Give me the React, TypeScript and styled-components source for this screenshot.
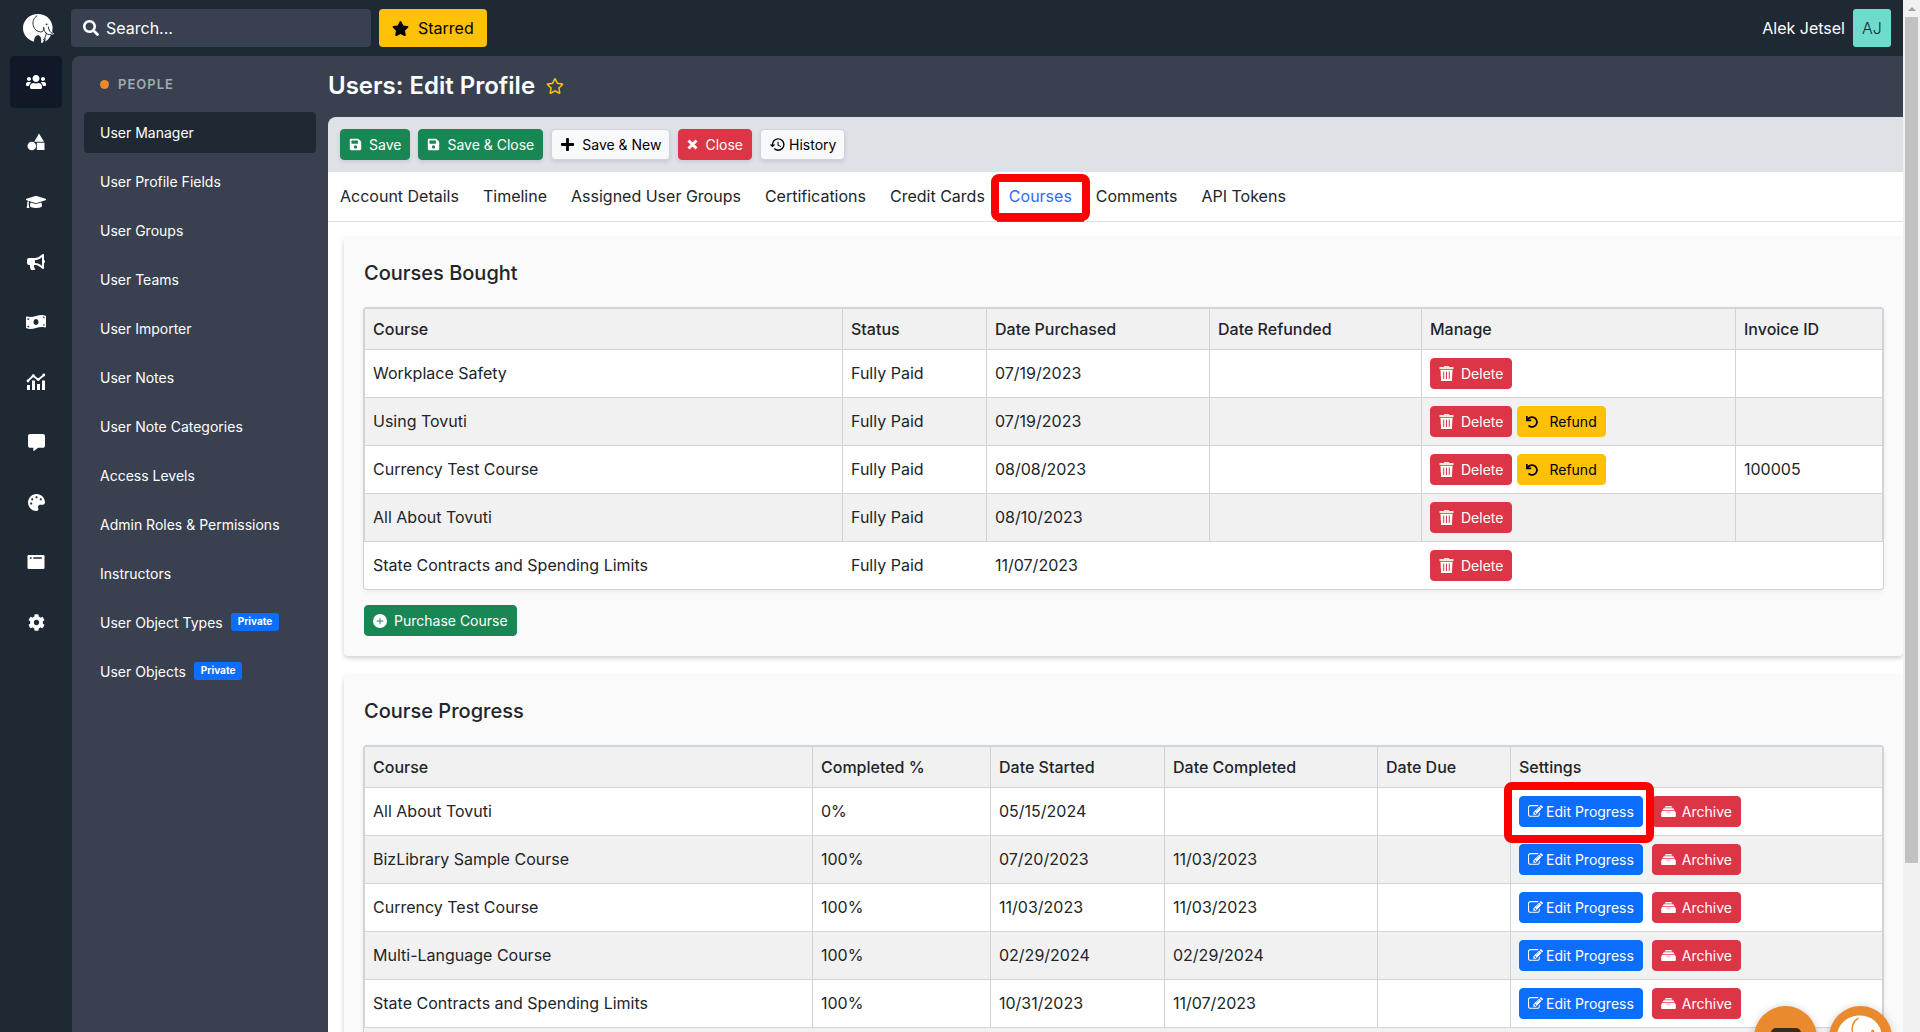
import React from "react";
import styled, { createGlobalStyle, css } from "styled-components";
import {
  FaBullhorn,
  FaCog,
  FaCommentAlt,
  FaGraduationCap,
  FaMoneyBillWave,
  FaPalette,
  FaPlus,
  FaRegStar,
  FaSave,
  FaSearch,
  FaStar,
  FaUndo,
  FaUsers,
} from "react-icons/fa";
import { MdHistory } from "react-icons/md";
import { BsPlusCircleFill } from "react-icons/bs";

const color = {
  chrome: "#1f2933",
  chromeActive: "#111827",
  panel: "#394150",
  toolbar: "#dee2e6",
  border: "#ced4da",
  stripe: "#f1f1f1",
  card: "#fafafa",
  text: "#212529",
  green: "#198754",
  red: "#dc3545",
  blue: "#0d6efd",
  yellow: "#ffc107",
  orange: "#e98a2e",
};

const GlobalStyle = createGlobalStyle`
  *, *::before, *::after { box-sizing: border-box; }
  body {
    margin: 0;
    background: #fff;
    color: ${color.text};
    font-family: Inter, "Liberation Sans", sans-serif;
    font-size: 16px;
    font-weight: 400;
    line-height: 24px;
  }
  button, input { font: inherit; color: inherit; }
  a { color: inherit; text-decoration: none; }
`;

const Page = styled.div`
  display: flex;
  height: 100vh;
  overflow: hidden;
`;

const Shell = styled.div`
  flex: 1;
  min-width: 0;
  display: flex;
  flex-direction: column;
  background: ${color.chrome};
`;

const Header = styled.header`
  flex: none;
  height: 56px;
  display: flex;
  align-items: center;
  gap: 8px;
  padding: 0 12px 0 23px;
  color: #fff;
`;

const HomeLink = styled.a`
  display: flex;
  width: 40px;
`;

const SearchBox = styled.label`
  width: 300px;
  height: 38px;
  display: flex;
  align-items: center;
  gap: 7px;
  padding: 0 12px;
  border-radius: 4px;
  background: ${color.panel};
`;

const SearchInput = styled.input`
  flex: 1;
  min-width: 0;
  padding: 0;
  border: 0;
  outline: 0;
  background: none;
  &::placeholder { color: #fff; opacity: 1; }
`;

const StarredButton = styled.button`
  height: 38px;
  display: flex;
  align-items: center;
  gap: 9px;
  padding: 0 13px;
  border: 0;
  border-radius: 4px;
  background: ${color.yellow};
  color: #000;
`;

const Account = styled.div`
  margin-left: auto;
  display: flex;
  align-items: center;
  gap: 8px;
`;

const Avatar = styled.span`
  width: 38px;
  height: 38px;
  display: grid;
  place-items: center;
  border-radius: 3px;
  background: #6edccd;
  color: ${color.text};
  font-weight: 300;
`;

const Body = styled.div`
  flex: 1;
  min-height: 0;
  display: flex;
`;

const Rail = styled.nav`
  flex: none;
  width: 72px;
  display: flex;
  flex-direction: column;
  align-items: center;
  gap: 8px;
`;

const RailLink = styled.a<{ $active?: boolean }>`
  width: 52px;
  height: 52px;
  display: grid;
  place-items: center;
  border-radius: 4px;
  color: #fff;
  background: ${(p) => (p.$active ? color.chromeActive : "transparent")};
`;

const Workspace = styled.div`
  flex: 1;
  min-width: 0;
  display: flex;
  border-top-left-radius: 8px;
  background: ${color.panel};
  overflow: hidden;
`;

const Menu = styled.nav`
  flex: none;
  width: 256px;
  padding: 16px 12px 0;
  color: #fff;
`;

const MenuTitle = styled.h2`
  display: flex;
  align-items: center;
  gap: 9px;
  height: 24px;
  margin: 0 0 16px;
  padding-left: 16px;
  color: #a3a9b2;
  font-size: 13px;
  font-weight: 600;
  letter-spacing: 1px;
  &::before {
    content: "";
    width: 9px;
    height: 9px;
    border-radius: 50%;
    background: ${color.orange};
  }
`;

const MenuList = styled.ul`
  display: grid;
  gap: 8px;
  margin: 0;
  padding: 0;
  list-style: none;
`;

const MenuLink = styled.a<{ $active?: boolean }>`
  height: 41px;
  display: flex;
  align-items: center;
  gap: 8px;
  padding: 0 16px;
  border-radius: 4px;
  font-size: 14px;
  background: ${(p) => (p.$active ? color.chrome : "transparent")};
`;

const Badge = styled.span`
  height: 18px;
  margin-bottom: 2px;
  padding: 0 7px;
  border-radius: 3px;
  background: ${color.blue};
  font-size: 10px;
  font-weight: 700;
  line-height: 17px;
`;

const Main = styled.main`
  flex: 1;
  min-width: 0;
  display: flex;
  flex-direction: column;
`;

const TitleBar = styled.div`
  flex: none;
  height: 61px;
  display: flex;
  align-items: center;
  gap: 11px;
  padding-bottom: 1px;
  color: #fff;
`;

const PageTitle = styled.h1`
  margin: 0;
  font-size: 24px;
  font-weight: 600;
  line-height: 32px;
`;

const IconButton = styled.button`
  display: flex;
  padding: 0;
  border: 0;
  background: none;
  color: ${color.yellow};
`;

const Toolbar = styled.div`
  flex: none;
  display: flex;
  gap: 8px;
  padding: 12px;
  border-top-left-radius: 8px;
  background: ${color.toolbar};
`;

type Tone = "green" | "red" | "blue" | "yellow" | "light";

const tones = {
  green: css`background: ${color.green}; border-color: ${color.green}; color: #fff;`,
  red: css`background: ${color.red}; border-color: ${color.red}; color: #fff;`,
  blue: css`background: ${color.blue}; border-color: ${color.blue}; color: #fff;`,
  yellow: css`background: ${color.yellow}; border-color: ${color.yellow}; color: #000;`,
  light: css`background: #f8f9fa; border-color: ${color.border}; color: #000;`,
};

const Button = styled.button<{ $tone: Tone; $gap?: number; $raised?: boolean }>`
  position: relative;
  height: 31px;
  display: inline-flex;
  align-items: center;
  gap: ${(p) => p.$gap ?? 7}px;
  padding: 0 8px;
  border: 1px solid;
  border-radius: 4px;
  font-size: 14px;
  line-height: 21px;
  white-space: nowrap;
  ${(p) => tones[p.$tone]}
  ${(p) => p.$raised && css`box-shadow: 0 2px 4px rgba(0, 0, 0, 0.1);`}
`;

const Marker = styled.span<{ $inset: string }>`
  position: absolute;
  z-index: 2;
  inset: ${(p) => p.$inset};
  border: 8px solid #f00;
  border-radius: 8px;
  pointer-events: none;
`;

const Tabs = styled.nav`
  flex: none;
  display: flex;
  height: 50px;
  border-bottom: 1px solid #dee2e6;
  background: #fff;
`;

const Tab = styled.a<{ $active?: boolean }>`
  position: relative;
  height: 50px;
  padding: 12px 12px 0;
  ${(p) =>
    p.$active &&
    css`
      border-bottom: 2px solid #2563eb;
      color: #2f6bff;
    `}
`;

const Content = styled.div`
  flex: 1;
  min-height: 0;
  padding: 16px 0 0 16px;
  background: #fff;
  overflow: hidden;
`;

const Card = styled.section`
  margin-bottom: 20px;
  padding: 20px;
  border-radius: 4px;
  background: ${color.card};
  box-shadow: 0 2px 5px rgba(0, 0, 0, 0.2);
`;

const CardTitle = styled.h2`
  margin: 0 0 20px;
  font-size: 20px;
  font-weight: 500;
  line-height: 30px;
`;

const TableFrame = styled.div`
  border-radius: 3px;
  background: #fff;
  box-shadow: 0 0 0 1px ${color.border}, 0 2px 6px rgba(0, 0, 0, 0.08);
`;

const DataTable = styled.table`
  width: 100%;
  table-layout: fixed;
  border-collapse: separate;
  border-spacing: 0;
`;

const HeadCell = styled.th<{ $width?: number }>`
  width: ${(p) => (p.$width ? `${p.$width}px` : "auto")};
  height: 42px;
  padding: 0 8px;
  border: 0 solid ${color.border};
  border-width: 1px 1px 1px 0;
  background: ${color.stripe};
  font-weight: 500;
  text-align: left;
  &:first-child { border-left-width: 1px; }
`;

const Row = styled.tr`
  &:nth-child(even) { background: ${color.stripe}; }
`;

const Cell = styled.td`
  height: 48px;
  padding: 0 8px 2px;
  border: 0 solid ${color.border};
  border-width: 0 1px 1px 0;
  &:first-child { border-left-width: 1px; }
  &:has(button) { padding-bottom: 0; }
  ${Row}:last-child & {
    height: 47px;
    border-color: transparent;
    border-bottom-width: 0;
  }
`;

const Actions = styled.div<{ $gap: number }>`
  display: flex;
  gap: ${(p) => p.$gap}px;
`;

const CardFooter = styled.div`
  display: flex;
  margin-top: 16px;
`;

const ScrollTrack = styled.div`
  flex: none;
  width: 17px;
  display: flex;
  flex-direction: column;
  align-items: center;
  background: #f1f1f1;
`;

const ScrollArrow = styled.span`
  height: 17px;
  display: flex;
  align-items: center;
  &::before {
    content: "";
    border: 4px solid transparent;
    border-top: 0;
    border-bottom-color: #a3a3a3;
  }
`;

const ScrollThumb = styled.span`
  width: 13px;
  height: 82%;
  background: #c1c1c1;
`;

const Launchers = styled.div`
  position: fixed;
  right: 28px;
  bottom: -37px;
  display: flex;
  gap: 12px;
`;

const Launcher = styled.button`
  width: 63px;
  height: 63px;
  display: grid;
  place-items: center;
  padding: 0;
  border: 0;
  border-radius: 50%;
  background: ${color.orange};
  box-shadow: 0 1px 8px rgba(0, 0, 0, 0.2);
`;

const Elephant = ({ size, line }: { size: number; line: string }) => (
  <svg width={size} height={size} viewBox="0 0 30 30" aria-hidden="true">
    <path
      fill="#fff"
      d="M14.5 1C22 1 28 6 28.6 13.500c.1 2-.5 4.200-.1 5.200.4.900 1.200 1.200 2 1.200-.7.900-2 1.100-3.200.6-.7 2.200-2.600 5.300-5.800 7.400.5-1.400.4-2.700 0-3.900l-2.300 4.600c-.9.300-1.200.3-1.800.3.500-3 .3-6.300-2-7.200-2.500-.8-4.600 1.800-4.900 6.100C4 25.200 0 21 0 14.500 0 7 6.500 1 14.500 1Z"
    />
    <path
      fill="none"
      stroke={line}
      strokeWidth="0.900"
      strokeLinecap="round"
      d="M13.500 2.800C10 4.500 9 9 10 12.500c1 3.300 3.500 5.500 7 5.800 2.500.2 3.400-1.500 3-4.200M20 14.100c.7 4.500 2.500 7.300 6.800 6.700M24.500 13.500c.5 3 1.500 5.800 4.300 6.200M22.500 19.500c-.2 2.500-1 4.500-2.700 6.500"
    />
    <circle cx="22.800" cy="11" r="0.900" fill={line} />
  </svg>
);

const ShapesIcon = () => (
  <svg width="18" height="18" viewBox="0 0 18 18" fill="currentColor" aria-hidden="true">
    <path d="M12 0.500l5 8.200H7.200z" />
    <circle cx="4.800" cy="13" r="4.300" />
    <path d="M9.800 9.700H17.500V17H9.800z" />
  </svg>
);

const ChartIcon = () => (
  <svg width="20" height="18" viewBox="0 0 20 18" fill="currentColor" aria-hidden="true">
    <path d="M1 12h3v5H1zM6 7.500h3V17H6zM11 11h3v6h-3zM16 7.500h3V17h-3z" />
    <path d="M1.800 8l5.400-5.200 5 4L18 2" fill="none" stroke="currentColor" strokeWidth="1.800" />
    <circle cx="2" cy="8" r="1.400" />
    <circle cx="7.300" cy="2.600" r="1.400" />
    <circle cx="12.300" cy="6.600" r="1.400" />
    <circle cx="17.800" cy="2" r="1.400" />
  </svg>
);

const WindowIcon = () => (
  <svg width="18" height="16" viewBox="0 0 18 16" aria-hidden="true">
    <rect x="0.500" y="1" width="17" height="14" rx="1.200" fill="currentColor" />
    <path d="M2.800 3.200h1.800v1.600H2.800zM6.300 3.200h8.500v1.600H6.300z" fill={color.chrome} />
  </svg>
);

const CrossIcon = () => (
  <svg width="11" height="11" viewBox="0 0 11 11" aria-hidden="true">
    <path d="M1.500 1.500l8 8M9.500 1.500l-8 8" stroke="currentColor" strokeWidth="3" />
  </svg>
);

const EditIcon = () => (
  <svg width="15" height="15" viewBox="0 0 1792 1792" fill="currentColor" aria-hidden="true">
    <path d="M888 1184l116-116-152-152-116 116v56h96v96h56zm440-720q-16-16-33 1l-350 350q-17 17-1 33t33-1l350-350q17-17 1-33zm80 594v190q0 119-84.500 203.500t-203.500 84.500h-832q-119 0-203.500-84.500t-84.500-203.500v-832q0-119 84.500-203.500t203.500-84.500h832q63 0 117 25 15 7 18 23 3 17-9 29l-49 49q-14 14-32 8-23-6-45-6h-832q-66 0-113 47t-47 113v832q0 66 47 113t113 47h832q66 0 113-47t47-113v-126q0-13 9-22l64-64q15-15 35-7t20 29zm-96-738l288 288-672 672h-288v-288zm444 132l-92 92-288-288 92-92q28-28 68-28t68 28l152 152q28 28 28 68t-28 68z" />
  </svg>
);

const TrashIcon = () => (
  <svg width="15" height="15" viewBox="0 0 15 15" fill="currentColor" aria-hidden="true">
    <path d="M5 0h5v1h4.500v2.200H.500V1H5z" opacity="0.850" />
    <path
      fillRule="evenodd"
      d="M1.500 4h12l-.6 11H2.100zM4.200 5.500v7.500h1V5.500zM7 5.500v7.500h1V5.500zM9.800 5.500v7.500h1V5.500z"
    />
  </svg>
);

const DrawerIcon = () => (
  <svg width="15" height="11" viewBox="0 0 16 12" fill="currentColor" aria-hidden="true">
    <path d="M5.200 0h5.600l1.600 1.600H3.600zM2.800 2.400h10.400l1.300 2H1.500z" />
    <path d="M1 5.200h14l1 2.300V11a1 1 0 0 1-1 1H1a1 1 0 0 1-1-1V7.500z" />
    <path d="M5.500 6h5v1.800h-5z" fill={color.red} opacity="0.250" />
  </svg>
);

const ChatIcon = () => (
  <svg width="30" height="20" viewBox="0 0 30 20" aria-hidden="true">
    <path
      d="M5 0h20a5 5 0 0 1 5 5v8a4 4 0 0 1-4 4H16l-7 3v-3H4a4 4 0 0 1-4-4V5a5 5 0 0 1 5-5Z"
      fill="#3d2a15"
    />
  </svg>
);

const railItems = [
  { label: "People", icon: <FaUsers size={20} /> },
  { label: "Content", icon: <ShapesIcon /> },
  { label: "Courses", icon: <FaGraduationCap size={20} /> },
  { label: "Marketing", icon: <FaBullhorn size={18} /> },
  { label: "Commerce", icon: <FaMoneyBillWave size={20} /> },
  { label: "Reports", icon: <ChartIcon /> },
  { label: "Messages", icon: <FaCommentAlt size={17} /> },
  { label: "Design", icon: <FaPalette size={17} /> },
  { label: "Pages", icon: <WindowIcon /> },
  { label: "Settings", icon: <FaCog size={17} /> },
];

const menuItems: { label: string; isPrivate?: boolean }[] = [
  { label: "User Manager" },
  { label: "User Profile Fields" },
  { label: "User Groups" },
  { label: "User Teams" },
  { label: "User Importer" },
  { label: "User Notes" },
  { label: "User Note Categories" },
  { label: "Access Levels" },
  { label: "Admin Roles & Permissions" },
  { label: "Instructors" },
  { label: "User Object Types", isPrivate: true },
  { label: "User Objects", isPrivate: true },
];

const tabs = [
  "Account Details",
  "Timeline",
  "Assigned User Groups",
  "Certifications",
  "Credit Cards",
  "Courses",
  "Comments",
  "API Tokens",
];

const purchases = [
  { course: "Workplace Safety", date: "07/19/2023" },
  { course: "Using Tovuti", date: "07/19/2023", refundable: true },
  { course: "Currency Test Course", date: "08/08/2023", refundable: true, invoice: "100005" },
  { course: "All About Tovuti", date: "08/10/2023" },
  { course: "State Contracts and Spending Limits", date: "11/07/2023" },
];

const progress = [
  { course: "All About Tovuti", percent: "0%", started: "05/15/2024", completed: "" },
  { course: "BizLibrary Sample Course", percent: "100%", started: "07/20/2023", completed: "11/03/2023" },
  { course: "Currency Test Course", percent: "100%", started: "11/03/2023", completed: "11/03/2023" },
  { course: "Multi-Language Course", percent: "100%", started: "02/29/2024", completed: "02/29/2024" },
  { course: "State Contracts and Spending Limits", percent: "100%", started: "10/31/2023", completed: "11/07/2023" },
];

const CoursesBought = () => (
  <Card>
    <CardTitle>Courses Bought</CardTitle>
    <TableFrame>
      <DataTable>
        <thead>
          <tr>
            <HeadCell>Course</HeadCell>
            <HeadCell $width={144}>Status</HeadCell>
            <HeadCell $width={223}>Date Purchased</HeadCell>
            <HeadCell $width={212}>Date Refunded</HeadCell>
            <HeadCell $width={314}>Manage</HeadCell>
            <HeadCell $width={147}>Invoice ID</HeadCell>
          </tr>
        </thead>
        <tbody>
          {purchases.map((item) => (
            <Row key={item.course}>
              <Cell>{item.course}</Cell>
              <Cell>Fully Paid</Cell>
              <Cell>{item.date}</Cell>
              <Cell />
              <Cell>
                <Actions $gap={5}>
                  <Button $tone="red"><TrashIcon />Delete</Button>
                  {item.refundable && (
                    <Button $tone="yellow" $gap={11}><FaUndo size={12} />Refund</Button>
                  )}
                </Actions>
              </Cell>
              <Cell>{item.invoice}</Cell>
            </Row>
          ))}
        </tbody>
      </DataTable>
    </TableFrame>
    <CardFooter>
      <Button $tone="green"><BsPlusCircleFill size={14} />Purchase Course</Button>
    </CardFooter>
  </Card>
);

const CourseProgress = () => (
  <Card>
    <CardTitle>Course Progress</CardTitle>
    <TableFrame>
      <DataTable>
        <thead>
          <tr>
            <HeadCell>Course</HeadCell>
            <HeadCell $width={178}>Completed %</HeadCell>
            <HeadCell $width={174}>Date Started</HeadCell>
            <HeadCell $width={213}>Date Completed</HeadCell>
            <HeadCell $width={133}>Date Due</HeadCell>
            <HeadCell $width={372}>Settings</HeadCell>
          </tr>
        </thead>
        <tbody>
          {progress.map((item, index) => (
            <Row key={item.course}>
              <Cell>{item.course}</Cell>
              <Cell>{item.percent}</Cell>
              <Cell>{item.started}</Cell>
              <Cell>{item.completed}</Cell>
              <Cell />
              <Cell>
                <Actions $gap={9}>
                  <Button $tone="blue" $gap={3}>
                    <EditIcon />Edit Progress
                    {index === 0 && <Marker $inset="-15px -12px -17px -16px" />}
                  </Button>
                  <Button $tone="red" $gap={6}><DrawerIcon />Archive</Button>
                </Actions>
              </Cell>
            </Row>
          ))}
          <Row>
            <Cell /><Cell /><Cell /><Cell /><Cell /><Cell />
          </Row>
        </tbody>
      </DataTable>
    </TableFrame>
  </Card>
);

export default function App() {
  return (
    <Page>
      <GlobalStyle />
      <Shell>
        <Header>
          <HomeLink href="#" aria-label="Home"><Elephant size={31} line={color.chrome} /></HomeLink>
          <SearchBox>
            <FaSearch size={16} />
            <SearchInput type="search" placeholder="Search..." aria-label="Search" />
          </SearchBox>
          <StarredButton><FaStar size={17} />Starred</StarredButton>
          <Account>Alek Jetsel<Avatar>AJ</Avatar></Account>
        </Header>
        <Body>
          <Rail aria-label="Sections">
            {railItems.map((item, index) => (
              <RailLink key={item.label} href="#" aria-label={item.label} $active={index === 0}>
                {item.icon}
              </RailLink>
            ))}
          </Rail>
          <Workspace>
            <Menu aria-label="People">
              <MenuTitle>PEOPLE</MenuTitle>
              <MenuList>
                {menuItems.map((item, index) => (
                  <li key={item.label}>
                    <MenuLink href="#" $active={index === 0}>
                      {item.label}
                      {item.isPrivate && <Badge>Private</Badge>}
                    </MenuLink>
                  </li>
                ))}
              </MenuList>
            </Menu>
            <Main>
              <TitleBar>
                <PageTitle>Users: Edit Profile</PageTitle>
                <IconButton aria-label="Star this page"><FaRegStar size={18} /></IconButton>
              </TitleBar>
              <Toolbar>
                <Button $tone="green" $raised><FaSave size={13} />Save</Button>
                <Button $tone="green" $raised><FaSave size={13} />Save &amp; Close</Button>
                <Button $tone="light" $raised><FaPlus size={15} />Save &amp; New</Button>
                <Button $tone="red" $raised><CrossIcon />Close</Button>
                <Button $tone="light" $gap={3} $raised><MdHistory size={17} />History</Button>
              </Toolbar>
              <Tabs aria-label="Profile sections">
                {tabs.map((name) => (
                  <Tab key={name} href="#" $active={name === "Courses"}>
                    {name}
                    {name === "Courses" && <Marker $inset="2px -6px -1px -6px" />}
                  </Tab>
                ))}
              </Tabs>
              <Content>
                <CoursesBought />
                <CourseProgress />
              </Content>
            </Main>
          </Workspace>
        </Body>
      </Shell>
      <ScrollTrack aria-hidden="true">
        <ScrollArrow />
        <ScrollThumb />
      </ScrollTrack>
      <Launchers>
        <Launcher aria-label="Open chat"><ChatIcon /></Launcher>
        <Launcher aria-label="Open help"><Elephant size={47} line={color.orange} /></Launcher>
      </Launchers>
    </Page>
  );
}
